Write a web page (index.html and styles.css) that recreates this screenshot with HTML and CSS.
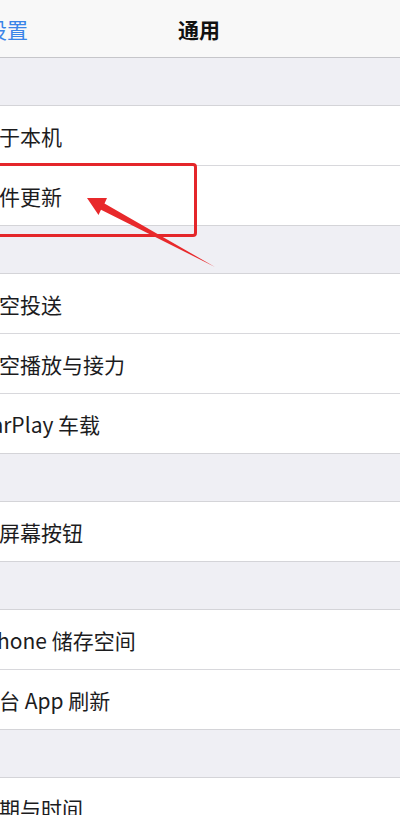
FILE: index.html
```html
<!DOCTYPE html>
<html lang="zh-CN">
<head>
  <meta charset="UTF-8" />
  <meta name="viewport" content="width=device-width, initial-scale=1" />
  <title>通用</title>
  <link rel="stylesheet" href="styles.css">
</head>
<body>
  <div class="screen">
    <div class="navbar">
      <span class="back">设置</span>
      <span class="title">通用</span>
    </div>

    <div class="group">
      <div class="row"><span class="label">关于本机</span></div>
      <div class="row highlight">
        <span class="label">软件更新</span>
        <div class="mark"></div>
      </div>
    </div>

    <div class="group">
      <div class="row"><span class="label">隔空投送</span></div>
      <div class="row"><span class="label">隔空播放与接力</span></div>
      <div class="row"><span class="label">CarPlay 车载</span></div>
    </div>

    <div class="group">
      <div class="row"><span class="label">主屏幕按钮</span></div>
    </div>

    <div class="group">
      <div class="row"><span class="label">iPhone 储存空间</span></div>
      <div class="row"><span class="label">后台 App 刷新</span></div>
    </div>

    <div class="group">
      <div class="row"><span class="label">日期与时间</span></div>
    </div>

    <!-- annotation arrow -->
    <svg class="arrow" width="400" height="815" viewBox="0 0 400 815">
      <polygon points="87,198 107,198 104.5,203.5 215,267 101,209.7 98.5,215" fill="#e8292b" />
    </svg>
  </div>
</body>
</html>
```

FILE: styles.css
```css
body {
  margin: 0;
  background-color: #efeff4;
  font-family: "Noto Sans CJK SC", "Noto Sans", sans-serif;
  color: #1c1c1e;
  overflow: hidden;
}
.screen {
  position: relative;
  width: 400px;
  height: 815px;
  overflow: hidden;
}
.navbar {
  height: 57px;
  background-color: #f8f8f8;
  border-bottom: 1px solid #c6c6ca;
  display: flex;
  align-items: center;
  justify-content: center;
  position: relative;
}
.back {
  position: absolute;
  left: -14px;
  top: 50%;
  transform: translateY(-50%);
  color: #3a84e8;
  font-size: 21px;
  white-space: nowrap;
}
.title {
  font-size: 21px;
  font-weight: 600;
  color: #111;
  margin-left: -2px;
}
.group {
  margin-top: 47px;
  background-color: #fff;
  border-top: 1px solid #d4d4d8;
  border-bottom: 1px solid #d4d4d8;
}
.row {
  height: 59px;
  display: flex;
  align-items: center;
  position: relative;
}
.row + .row {
  border-top: 1px solid #d8d8dc;
}
.label {
  margin-left: -22px;
  font-size: 21px;
  white-space: nowrap;
}
.mark {
  position: absolute;
  left: -10px;
  top: -3px;
  width: 207px;
  height: 74px;
  box-sizing: border-box;
  border: 3px solid #e4262a;
  border-radius: 4px;
}
.arrow {
  position: absolute;
  left: 0;
  top: 0;
  pointer-events: none;
}
```
